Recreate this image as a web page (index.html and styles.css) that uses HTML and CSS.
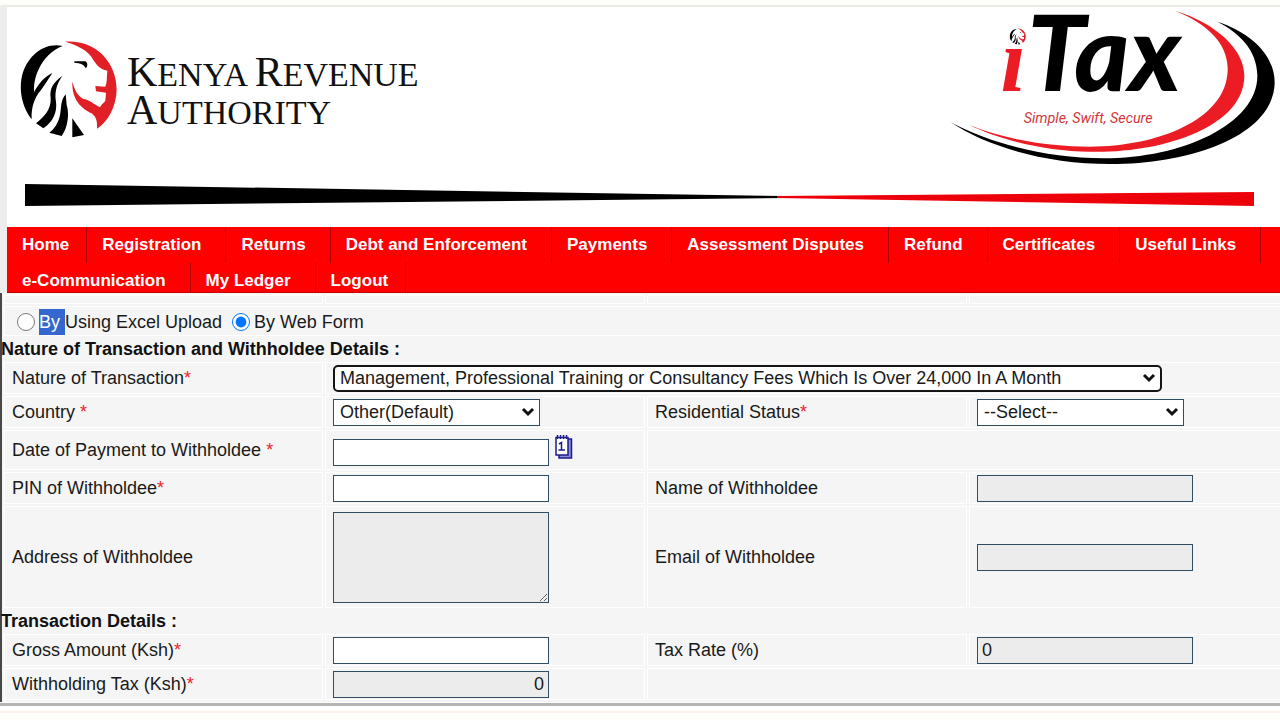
FILE: index.html
```html
<!DOCTYPE html>
<html lang="en">
<head>
    <meta charset="UTF-8">
    <meta name="viewport" content="width=device-width, initial-scale=1.0">
    <title>iTax - Withholding Tax</title>
    <link rel="stylesheet" href="styles.css">
</head>
<body>
	<div class="wrapper">
		<header class="header">
			<div class="logos">
				<div class="kra">
					<svg class="lion" viewBox="0 0 360 360" aria-hidden="true">
						<g id="lion">
							<path d="M158 48C110 36 57 70 38 130C24 180 38 235 65 268C64 235 70 215 85 190C98 176 112 152 127 129C105 140 85 160 73 186C68 150 90 75 158 48z"/>
							<path d="M157 138C130 157 118 175 122 205C124 240 100 262 78 280L100 295C130 275 142 245 138 215C132 180 145 155 157 138z"/>
							<path d="M167 193C150 213 155 235 150 255C145 280 132 298 118 308L155 318C175 290 178 250 170 225z"/>
							<path d="M187 265L222 315L187 322z"/>
							<path d="M193 94L226 94C236 100 231 112 228 115C222 104 212 99 193 98z"/>
							<path fill="#e01f26" d="M165 35C250 28 320 90 320 180C318 230 295 275 261 296C262 270 258 262 245 250C215 235 185 210 187 155C195 180 200 195 220 207C235 207 255 225 270 232C275 222 285 215 286 212L288 188L258 184L256 168L286 170C292 155 290 140 292 122C270 118 260 105 250 90C235 60 200 45 165 35z"/>
						</g>
					</svg>
					<div class="kra-name"><span>K</span>ENYA <span>R</span>EVENUE<br><span>A</span>UTHORITY</div>
				</div>
				<svg class="itax" viewBox="0 21 1050 501" role="img" aria-label="iTax">
					<path fill="#ec1c24" d="M735 32C860 70 945 150 943 230C940 380 700 460 480 455C350 455 210 420 118 375C230 420 360 440 480 440C680 440 890 360 893 210C895 130 830 70 735 32z"/>
					<path d="M862 65C970 100 1035 170 1034 250C1030 400 800 492 540 492C350 492 170 440 62 367C180 430 350 475 520 475C760 475 985 370 982 225C980 150 930 100 862 65z"/>
					<svg x="232" y="80" width="64" height="60" viewBox="0 0 360 360"><use href="#lion"/></svg>
					<text class="itax-i" x="212" y="272">ı</text>
					<text class="itax-tax" x="292" y="272">Tax</text>
					<text class="itax-slogan" x="281" y="369">Simple, Swift, Secure</text>
				</svg>
			</div>
			<svg class="stripe" viewBox="0 0 1230 24" preserveAspectRatio="none" aria-hidden="true">
				<path d="M0 1L760 13V15L0 23z"/>
				<path fill="#ec0009" d="M752 13L1229 9V23L752 15z"/>
			</svg>
		</header>

		<nav class="menu">
			<a href="#">Home</a>
			<a href="#" class="sub">Registration</a>
			<a href="#" class="sub">Returns</a>
			<a href="#" class="sub">Debt and Enforcement</a>
			<a href="#" class="sub">Payments</a>
			<a href="#" class="sub">Assessment Disputes</a>
			<a href="#" class="sub">Refund</a>
			<a href="#" class="sub">Certificates</a>
			<a href="#" class="sub">Useful Links</a>
			<a href="#" class="sub">e-Communication</a>
			<a href="#" class="sub">My Ledger</a>
			<a href="#">Logout</a>
		</nav>
	</div>

	<form autocomplete="off">
		<table class="form-table">
			<colgroup><col class="col-first"><col class="col"><col class="col"><col></colgroup>
			<tr class="spacer"><td></td><td></td><td></td><td></td></tr>
			<tr class="mode">
				<td colspan="4">
					<div class="radios">
						<input type="radio" name="mode" id="excel"><label for="excel"><span class="selected">By </span>Using Excel Upload</label>
						<input type="radio" name="mode" id="web" checked><label for="web">By Web Form</label>
					</div>
				</td>
			</tr>
			<tr><th colspan="4">Nature of Transaction and Withholdee Details :</th></tr>
			<tr>
				<td><label for="nature">Nature of Transaction<i>*</i></label></td>
				<td colspan="3">
					<select id="nature" class="wide">
						<option>Management, Professional Training or Consultancy Fees Which Is Over 24,000 In A Month</option>
					</select>
				</td>
			</tr>
			<tr>
				<td><label for="country">Country <i>*</i></label></td>
				<td><select id="country"><option>Other(Default)</option></select></td>
				<td><label for="status">Residential Status<i>*</i></label></td>
				<td><select id="status"><option>--Select--</option></select></td>
			</tr>
			<tr class="date-row">
				<td><label for="date">Date of Payment to Withholdee <i>*</i></label></td>
				<td>
					<div class="date">
						<input type="text" id="date">
						<button type="button" class="calendar" aria-label="Pick a date">
							<svg viewBox="0 0 18 24">
								<path fill="#8b8bd8" stroke="#1c1c8c" stroke-width="1.500" d="M4 4H16.500V23H4z"/>
								<path fill="#fff" stroke="#1c1c8c" stroke-width="1.500" d="M1 2.500H13V20H1z"/>
								<path fill="none" stroke="#1c1c8c" stroke-width="1.500" d="M2.500 0V4M5.500 0V4M8.500 0V4M11.500 0V4"/>
								<path fill="none" stroke="#1c1c8c" stroke-width="1.500" d="M4 9L6.500 7.500V15M3.500 15H10"/>
							</svg>
						</button>
					</div>
				</td>
				<td colspan="2"></td>
			</tr>
			<tr>
				<td><label for="pin">PIN of Withholdee<i>*</i></label></td>
				<td><input type="text" id="pin"></td>
				<td><label for="name">Name of Withholdee</label></td>
				<td><input type="text" id="name" readonly></td>
			</tr>
			<tr class="address-row">
				<td><label for="address">Address of Withholdee</label></td>
				<td><textarea id="address" readonly></textarea></td>
				<td><label for="email">Email of Withholdee</label></td>
				<td><input type="text" id="email" readonly></td>
			</tr>
			<tr><th colspan="4">Transaction Details :</th></tr>
			<tr>
				<td><label for="gross">Gross Amount (Ksh)<i>*</i></label></td>
				<td><input type="text" id="gross"></td>
				<td><label for="rate">Tax Rate (%)</label></td>
				<td><input type="text" id="rate" value="0" readonly></td>
			</tr>
			<tr>
				<td><label for="tax">Withholding Tax (Ksh)<i>*</i></label></td>
				<td><input type="text" id="tax" class="amount" value="0" readonly></td>
				<td colspan="2"></td>
			</tr>
		</table>
	</form>
	<div class="footer-line"></div>
</body>
</html>
```
FILE: styles.css
```css
* {
	box-sizing: border-box;
}
body {
	margin: 0;
	background-color: #fdfdfa;
	color: #1a1a1a;
	font-family: "Liberation Sans", Arial, Helvetica, sans-serif;
	font-size: 18px;
}
.wrapper {
	margin-top: 5px;
	border-top: 2px solid #e9ece2;
	border-left: 7px solid #ededed;
	background-color: #fff;
}

/* header */
.header {
	padding-bottom: 20px;
}
.logos {
	display: flex;
	justify-content: space-between;
	height: 176px;
}
.kra {
	display: flex;
	padding: 23px 0 0 3px;
}
.lion {
	width: 120px;
	height: 120px;
	margin-right: -3px;
}
.kra-name {
	padding-top: 26px;
	font-family: "Liberation Serif", "Times New Roman", serif;
	font-size: 34px;
	line-height: 38px;
	color: #111;
}
.kra-name span {
	font-size: 42px;
	line-height: 1px;
}
.itax {
	width: 350px;
	height: 167px;
	overflow: visible;
}
.itax-i {
	font: italic bold 270px "Liberation Serif", serif;
	fill: #ec1c24;
}
.itax-tax {
	font: italic 900 312px Lato, sans-serif;
}
.itax-slogan {
	font: italic 43px Roboto, sans-serif;
	fill: #d2383e;
}
.stripe {
	display: block;
	width: calc(100% - 43px);
	height: 24px;
	margin-left: 18px;
}

/* menu */
.menu {
	display: flex;
	flex-wrap: wrap;
	height: 66px;
	overflow: hidden;
	background-color: #fe0000;
	border-bottom: 1px solid #c40000;
}
.menu a {
	height: 36px;
	padding: 0 17px 0 15px;
	border-right: 1px solid #b00000;
	color: #fff;
	font-size: 17px;
	font-weight: bold;
	line-height: 35px;
	text-decoration: none;
}
.menu .sub {
	padding-right: 24px;
}

/* form */
form {
	overflow: hidden;
}
.form-table {
	width: calc(100% + 8px);
	table-layout: fixed;
	border-spacing: 2px;
	border-left: 2px solid #484848;
	background-color: #f5f5f5;
}
.col-first {
	width: 319px;
}
.col {
	width: 320px;
}
td {
	height: 32px;
	padding: 0 7px;
	border: 1px solid #fff;
}
.form-table i {
	color: #f0222c;
	font-style: normal;
}
th {
	height: 22px;
	padding: 0;
	color: #111;
	font-size: 18px;
	line-height: 22px;
	text-align: left;
	text-indent: -3px;
}
.spacer td {
	height: 9px;
}
.mode td {
	height: 30px;
	padding-top: 2px;
}
.date-row td {
	height: 40px;
}
.address-row td {
	height: 102px;
}
.radios {
	display: flex;
	align-items: center;
}
.radios input {
	width: 18px;
	height: 18px;
	margin: 0 4px 0 5px;
}
.radios label {
	margin-right: 5px;
	line-height: 26px;
}
.selected {
	display: inline-block;
	background-color: #3567d0;
	color: #fff;
	white-space: pre;
}
input[type="text"],
select,
textarea {
	display: block;
	width: 216px;
	height: 27px;
	margin: 0;
	padding: 0 4px;
	border: 1px solid #2f4d63;
	border-radius: 0;
	background-color: #fff;
	color: #1a1a1a;
	font-family: inherit;
	font-size: 18px;
}
select {
	width: 207px;
	padding: 0 6px;
	appearance: none;
	background: #fff url("data:image/svg+xml,%3Csvg xmlns='http://www.w3.org/2000/svg' width='14' height='10'%3E%3Cpath d='M2 2l5 5 5-5' fill='none' stroke='%23111' stroke-width='3'/%3E%3C/svg%3E") no-repeat right 4px center;
}
.wide {
	width: 829px;
	padding: 0 5px;
	border: 2px solid #151515;
	border-radius: 5px;
}
input[type="text"]:read-only,
textarea {
	background-color: #ececec;
}
textarea {
	height: 91px;
}
input.amount {
	text-align: right;
}
.date {
	display: flex;
	align-items: flex-start;
	gap: 6px;
}
input#date {
	margin-top: 4px;
}
.calendar {
	padding: 0;
	border: 0;
	background: none;
	cursor: pointer;
}
.calendar svg {
	display: block;
	width: 18px;
	height: 24px;
}
.footer-line {
	height: 10px;
	margin-top: 1px;
	border-top: 3px solid #b5b5b5;
	border-bottom: 2px solid #fff0eb;
	background-color: #fff;
}
```
